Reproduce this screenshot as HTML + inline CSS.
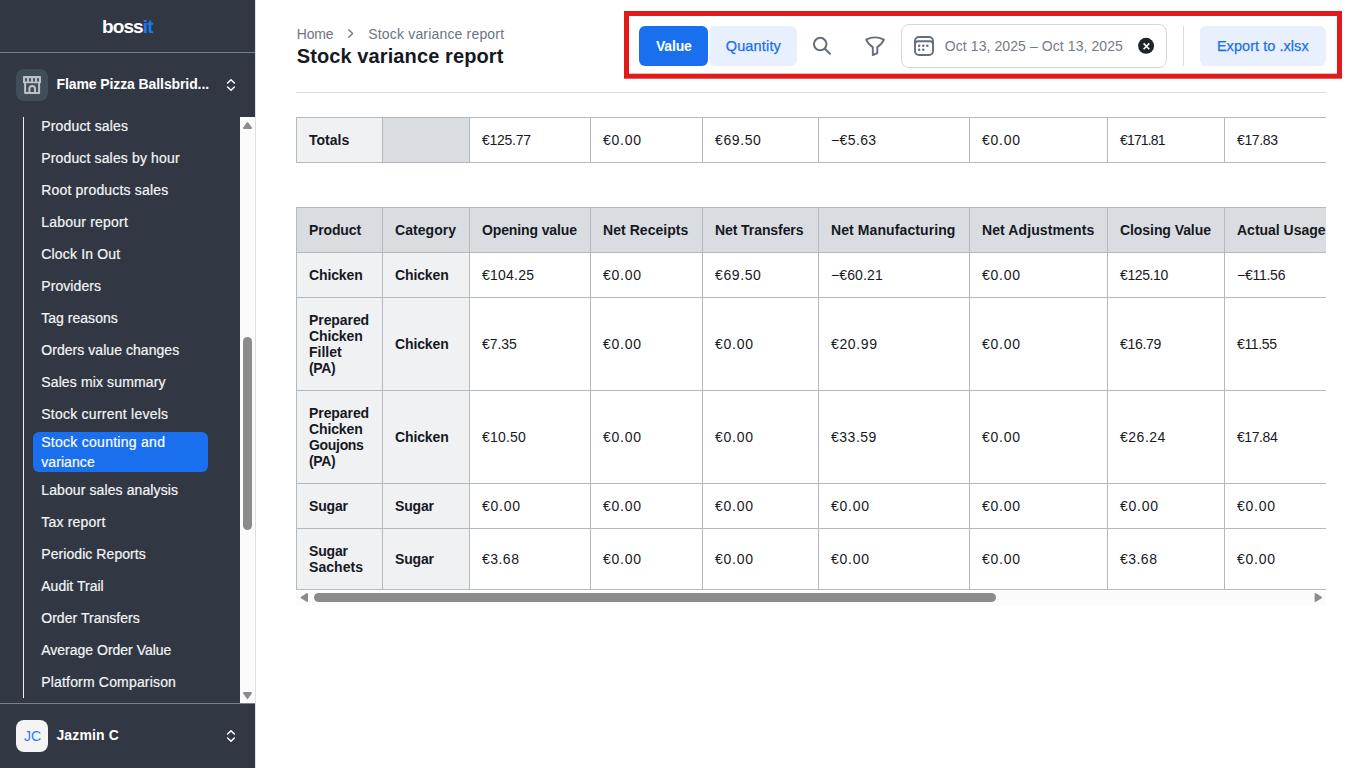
<!DOCTYPE html>
<html>
<head>
<meta charset="utf-8">
<title>Stock variance report</title>
<style>
*{box-sizing:border-box;margin:0;padding:0}
html,body{width:1366px;height:768px;overflow:hidden;background:#fff;font-family:"Liberation Sans",sans-serif;color:#16191f}
svg{position:absolute;overflow:visible}
/* sidebar */
#side{position:absolute;left:0;top:0;width:256px;height:768px;background:#313844;border-right:1px solid #dcdfe4}
#logo{position:absolute;left:101.9px;top:14.6px;color:#fff;font-weight:bold;font-size:19px;line-height:24px;white-space:nowrap}
#logo b{color:#1a78f5}
.hline{position:absolute;left:0;width:255px;height:1px;background:#77808c}
#shop{position:absolute;left:16px;top:69px;width:32px;height:32px;border-radius:8px;background:#424d5a}
#shopname{position:absolute;left:56.5px;top:74px;font-size:14px;font-weight:bold;color:#fff;line-height:20px;white-space:nowrap}
#vline{position:absolute;left:23px;top:117px;width:1px;height:581px;background:#eceef1}
.ni{position:absolute;left:41.25px;font-size:14px;color:#f3f5f7;line-height:20px;white-space:nowrap;-webkit-text-stroke:0.2px #f3f5f7}
#act{position:absolute;left:33px;top:432px;width:175px;height:40px;border-radius:6px;background:#1a6fee}
#sb{position:absolute;left:240px;top:117px;width:15px;height:586px;background:#fbfbfb}
#sbthumb{position:absolute;left:243px;top:337px;width:9px;height:193px;border-radius:4.5px;background:#8b8b8b}
#avatar{position:absolute;left:16px;top:720px;width:32px;height:32px;border-radius:8px;background:#f4f4f5;color:#2b7bff;font-size:14px;line-height:32px;text-align:center;padding-left:1px}
#uname{position:absolute;left:56.4px;top:725px;font-size:14px;font-weight:bold;color:#fff;line-height:20px;white-space:nowrap}
/* header */
.crumb{position:absolute;top:24px;font-size:14px;line-height:20px;color:#6d7580;white-space:nowrap}
#title{position:absolute;left:296.7px;top:44px;font-size:20px;line-height:24px;font-weight:bold;color:#16191f;white-space:nowrap}
#hr{position:absolute;left:296px;top:92px;width:1030px;height:1px;background:#d8dce0}
#red{position:absolute;left:624px;top:11px;width:718px;height:67.5px;border:4.7px solid #e4181b}
.btn{position:absolute;top:26px;height:40px;border-radius:6px;line-height:40px;white-space:nowrap}
.btn span{position:absolute;top:0}
#bval{left:639px;width:69px;background:#1a6fee;color:#fff;font-weight:bold;font-size:14px}
#bqty{left:709px;width:88px;background:#e8f0fd;color:#1a6fee;font-size:14.5px;-webkit-text-stroke:0.25px #1a6fee}
#bexp{left:1200px;width:126px;background:#e8f0fd;color:#1a6fee;font-size:14.5px;-webkit-text-stroke:0.25px #1a6fee}
#date{position:absolute;left:901px;top:24px;width:266px;height:44px;border:1px solid #d3d7dc;border-radius:8px;background:#fff}
#datetxt{position:absolute;left:944.8px;top:36px;font-size:14px;line-height:20px;color:#747c87;white-space:nowrap}
#vdiv{position:absolute;left:1183px;top:26px;width:1px;height:40px;background:#d8dce0}
/* tables */
#twrap{position:absolute;left:296px;top:117px;width:1030px;height:474px;overflow:hidden}
table{position:absolute;left:0;border-collapse:collapse;table-layout:fixed;width:1200px;font-size:14px}
td,th{border:1px solid #b4b8bf;padding:0 0 0 12px;text-align:left;vertical-align:middle;line-height:16px;white-space:nowrap;color:#16191f}
th{font-weight:bold;background:#eff1f3}
thead th{background:#d9dde1}
td{background:#fff;font-weight:normal}
#hsb{position:absolute;left:296px;top:591px;width:1030px;height:14px;background:#fbfbfb}
#hthumb{position:absolute;left:314px;top:593px;width:682px;height:9px;border-radius:4.5px;background:#8b8b8b}
</style>
</head>
<body>
<div id="side">
  <div id="logo" style="letter-spacing:-0.851px">boss<b>it</b></div>
  <div class="hline" style="top:52px"></div>
  <div id="shop"></div>
  <div id="shopname" style="letter-spacing:-0.097px">Flame Pizza Ballsbrid...</div>
  <div id="vline"></div>
  <div class="ni" style="top:116px;letter-spacing:0.156px">Product sales</div>
  <div class="ni" style="top:148px;letter-spacing:0.145px">Product sales by hour</div>
  <div class="ni" style="top:180px;letter-spacing:0.180px">Root products sales</div>
  <div class="ni" style="top:212px;letter-spacing:0.214px">Labour report</div>
  <div class="ni" style="top:244px;letter-spacing:0.168px">Clock In Out</div>
  <div class="ni" style="top:276px;letter-spacing:0.079px">Providers</div>
  <div class="ni" style="top:308px;letter-spacing:0.024px">Tag reasons</div>
  <div class="ni" style="top:340px;letter-spacing:0.049px">Orders value changes</div>
  <div class="ni" style="top:372px;letter-spacing:0.130px">Sales mix summary</div>
  <div class="ni" style="top:404px;letter-spacing:0.244px">Stock current levels</div>
  <div id="act"></div>
  <div class="ni" style="top:432px;color:#fff;letter-spacing:0.270px">Stock counting and</div>
  <div class="ni" style="top:452px;color:#fff;letter-spacing:0.079px">variance</div>
  <div class="ni" style="top:480px;letter-spacing:0.105px">Labour sales analysis</div>
  <div class="ni" style="top:512px;letter-spacing:0.200px">Tax report</div>
  <div class="ni" style="top:544px;letter-spacing:0.072px">Periodic Reports</div>
  <div class="ni" style="top:576px;letter-spacing:0.023px">Audit Trail</div>
  <div class="ni" style="top:608px;letter-spacing:0.035px">Order Transfers</div>
  <div class="ni" style="top:640px;letter-spacing:-0.004px">Average Order Value</div>
  <div class="ni" style="top:672px;letter-spacing:0.176px">Platform Comparison</div>
  <div id="sb"></div>
  <div id="sbthumb"></div>
  <div class="hline" style="top:703px"></div>
  <div id="avatar">JC</div>
  <div id="uname" style="letter-spacing:0.141px">Jazmin C</div>
</div>

<div class="crumb" style="left:296.7px;letter-spacing:-0.165px">Home</div>
<div class="crumb" style="left:368.3px;letter-spacing:0.172px">Stock variance report</div>
<div id="title" style="letter-spacing:0.108px">Stock variance report</div>
<div id="hr"></div>

<div id="bval" class="btn"><span style="left:16.9px;letter-spacing:-0.159px">Value</span></div>
<div id="bqty" class="btn"><span style="left:16.7px;letter-spacing:0.162px">Quantity</span></div>
<div id="date"></div>
<div id="datetxt" style="letter-spacing:0.085px">Oct 13, 2025 &ndash; Oct 13, 2025</div>
<div id="vdiv"></div>
<div id="bexp" class="btn"><span style="left:16.9px;letter-spacing:0.049px">Export to .xlsx</span></div>

<div id="twrap">
<table style="top:0"><colgroup><col style="width:86px"><col style="width:87px"><col style="width:121px"><col style="width:112px"><col style="width:116px"><col style="width:151px"><col style="width:138px"><col style="width:117px"><col style="width:272px"></colgroup><tr style="height:45px"><th><span style="letter-spacing:0.016px">Totals</span></th><th style="background:#d9dde1"></th><td><span style="letter-spacing:-0.258px">€125.77</span></td><td><span style="letter-spacing:0.731px">€0.00</span></td><td><span style="letter-spacing:0.612px">€69.50</span></td><td><span style="letter-spacing:0.380px">−€5.63</span></td><td><span style="letter-spacing:0.731px">€0.00</span></td><td><span style="letter-spacing:-0.844px">€171.81</span></td><td><span style="letter-spacing:-0.355px">€17.83</span></td></tr></table>
<table style="top:90px"><colgroup><col style="width:86px"><col style="width:87px"><col style="width:121px"><col style="width:112px"><col style="width:116px"><col style="width:151px"><col style="width:138px"><col style="width:117px"><col style="width:272px"></colgroup><thead><tr style="height:45px"><th><span style="letter-spacing:-0.142px">Product</span></th><th><span style="letter-spacing:0.052px">Category</span></th><th><span style="letter-spacing:-0.128px">Opening value</span></th><th><span style="letter-spacing:0.049px">Net Receipts</span></th><th><span style="letter-spacing:-0.083px">Net Transfers</span></th><th><span style="letter-spacing:0.095px">Net Manufacturing</span></th><th><span style="letter-spacing:0.105px">Net Adjustments</span></th><th><span style="letter-spacing:-0.070px">Closing Value</span></th><th><span style="letter-spacing:-0.009px">Actual Usage</span></th></tr></thead>
<tbody>
<tr style="height:45px"><th><span style="letter-spacing:-0.124px">Chicken</span></th><th><span style="letter-spacing:-0.124px">Chicken</span></th><td><span style="letter-spacing:0.242px">€104.25</span></td><td><span style="letter-spacing:0.731px">€0.00</span></td><td><span style="letter-spacing:0.612px">€69.50</span></td><td><span style="letter-spacing:0.114px">−€60.21</span></td><td><span style="letter-spacing:0.731px">€0.00</span></td><td><span style="letter-spacing:-0.401px">€125.10</span></td><td><span style="letter-spacing:-0.253px">−€11.56</span></td></tr>
<tr style="height:93px"><th><span style="letter-spacing:-0.075px">Prepared</span><br><span style="letter-spacing:-0.124px">Chicken</span><br><span style="letter-spacing:-0.012px">Fillet</span><br><span style="letter-spacing:-0.384px">(PA)</span></th><th><span style="letter-spacing:-0.124px">Chicken</span></th><td><span style="letter-spacing:-0.089px">€7.35</span></td><td><span style="letter-spacing:0.731px">€0.00</span></td><td><span style="letter-spacing:0.731px">€0.00</span></td><td><span style="letter-spacing:0.645px">€20.99</span></td><td><span style="letter-spacing:0.731px">€0.00</span></td><td><span style="letter-spacing:-0.288px">€16.79</span></td><td><span style="letter-spacing:-0.364px">€11.55</span></td></tr>
<tr style="height:93px"><th><span style="letter-spacing:-0.075px">Prepared</span><br><span style="letter-spacing:-0.124px">Chicken</span><br><span style="letter-spacing:-0.312px">Goujons</span><br><span style="letter-spacing:-0.384px">(PA)</span></th><th><span style="letter-spacing:-0.124px">Chicken</span></th><td><span style="letter-spacing:0.212px">€10.50</span></td><td><span style="letter-spacing:0.731px">€0.00</span></td><td><span style="letter-spacing:0.731px">€0.00</span></td><td><span style="letter-spacing:0.512px">€33.59</span></td><td><span style="letter-spacing:0.731px">€0.00</span></td><td><span style="letter-spacing:0.512px">€26.24</span></td><td><span style="letter-spacing:-0.421px">€17.84</span></td></tr>
<tr style="height:45px"><th><span style="letter-spacing:-0.158px">Sugar</span></th><th><span style="letter-spacing:-0.158px">Sugar</span></th><td><span style="letter-spacing:0.731px">€0.00</span></td><td><span style="letter-spacing:0.731px">€0.00</span></td><td><span style="letter-spacing:0.731px">€0.00</span></td><td><span style="letter-spacing:0.731px">€0.00</span></td><td><span style="letter-spacing:0.731px">€0.00</span></td><td><span style="letter-spacing:0.731px">€0.00</span></td><td><span style="letter-spacing:0.731px">€0.00</span></td></tr>
<tr style="height:61px"><th><span style="letter-spacing:-0.158px">Sugar</span><br><span style="letter-spacing:0.057px">Sachets</span></th><th><span style="letter-spacing:-0.158px">Sugar</span></th><td><span style="letter-spacing:0.471px">€3.68</span></td><td><span style="letter-spacing:0.731px">€0.00</span></td><td><span style="letter-spacing:0.731px">€0.00</span></td><td><span style="letter-spacing:0.731px">€0.00</span></td><td><span style="letter-spacing:0.731px">€0.00</span></td><td><span style="letter-spacing:0.471px">€3.68</span></td><td><span style="letter-spacing:0.731px">€0.00</span></td></tr>
</tbody></table>
</div>
<div id="hsb"></div>
<div id="hthumb"></div>

<svg style="left:0;top:0" width="1366" height="768" viewBox="0 0 1366 768">
  <!-- red annotation box -->
  <rect x="626.5" y="13.5" width="713" height="62.7" fill="none" stroke="#e31a1c" stroke-width="5"/>
  <!-- shop icon -->
  <g transform="translate(23,76)">
    <rect x="0" y="0" width="18" height="7.2" rx="0.7" fill="#bdc2c9"/>
    <rect x="2.1" y="2.2" width="1.9" height="3.3" fill="#424d5a"/>
    <rect x="6.1" y="2.2" width="1.9" height="3.3" fill="#424d5a"/>
    <rect x="10.1" y="2.2" width="1.9" height="3.3" fill="#424d5a"/>
    <rect x="14.1" y="2.2" width="1.9" height="3.3" fill="#424d5a"/>
    <path d="M2.1 7V17H16.1V7" fill="none" stroke="#bdc2c9" stroke-width="2" stroke-linejoin="round"/>
    <path d="M6.4 17V12.8a2.8 2.8 0 0 1 5.6 0V17" fill="none" stroke="#bdc2c9" stroke-width="2"/>
  </g>
  <!-- chevrons -->
  <g fill="none" stroke="#fff" stroke-width="1.5" stroke-linecap="round" stroke-linejoin="round">
    <path d="M227.6 83L231 79.8L234.4 83"/><path d="M227.6 87L231 90.2L234.4 87"/>
    <path d="M227.6 734L231 730.8L234.4 734"/><path d="M227.6 738L231 741.2L234.4 738"/>
  </g>
  <!-- scrollbar arrows -->
  <g fill="#8b8b8b" stroke="#8b8b8b" stroke-width="1.8" stroke-linejoin="round">
    <path d="M247.5 123.1L251.1 128.1H243.9Z"/>
    <path d="M247.5 698L251.1 693H243.9Z"/>
    <path d="M301.5 597.5L307.1 594V601Z"/>
    <path d="M1321.1 597.5L1315.5 594V601Z"/>
  </g>
  <!-- search -->
  <g fill="none" stroke="#636e7c" stroke-width="2" stroke-linecap="round">
    <circle cx="820.2" cy="44.1" r="6.25"/>
    <path d="M824.9 48.8L829.9 53.8"/>
  </g>
  <!-- filter -->
  <path d="M866.2 39.7Q874.9 35.1 883.9 39.7Q882 44.2 877.3 47.1V53.2L872.8 55V47.1Q868 44.2 866.2 39.7Z" fill="none" stroke="#636e7c" stroke-width="1.9" stroke-linejoin="round"/>
  <!-- calendar -->
  <g transform="translate(914,36)" fill="none" stroke="#636e7c" stroke-width="1.9">
    <rect x="1" y="1" width="18" height="18" rx="4"/>
    <path d="M1 8.6V8.2a3 3 0 0 1 3-3h12a3 3 0 0 1 3 3V8.6"/>
    <g fill="#636e7c" stroke="none">
      <circle cx="5.2" cy="9.8" r="1.25"/><circle cx="9.3" cy="9.8" r="1.25"/><circle cx="13.3" cy="9.8" r="1.25"/>
      <circle cx="5.2" cy="13.8" r="1.25"/><circle cx="9.3" cy="13.8" r="1.25"/>
    </g>
  </g>
  <!-- breadcrumb chevron -->
  <path d="M348.8 29.8L352.6 33.5L348.8 37.2" fill="none" stroke="#6d7580" stroke-width="1.3" stroke-linecap="round" stroke-linejoin="round"/>
  <!-- clear -->
  <circle cx="1146.1" cy="45.8" r="8" fill="#1f242c"/>
  <path d="M1143.6 43.4L1149.3 49.2M1149.3 43.4L1143.6 49.2" stroke="#fff" stroke-width="1.6" fill="none"/>
</svg>
</body>
</html>
